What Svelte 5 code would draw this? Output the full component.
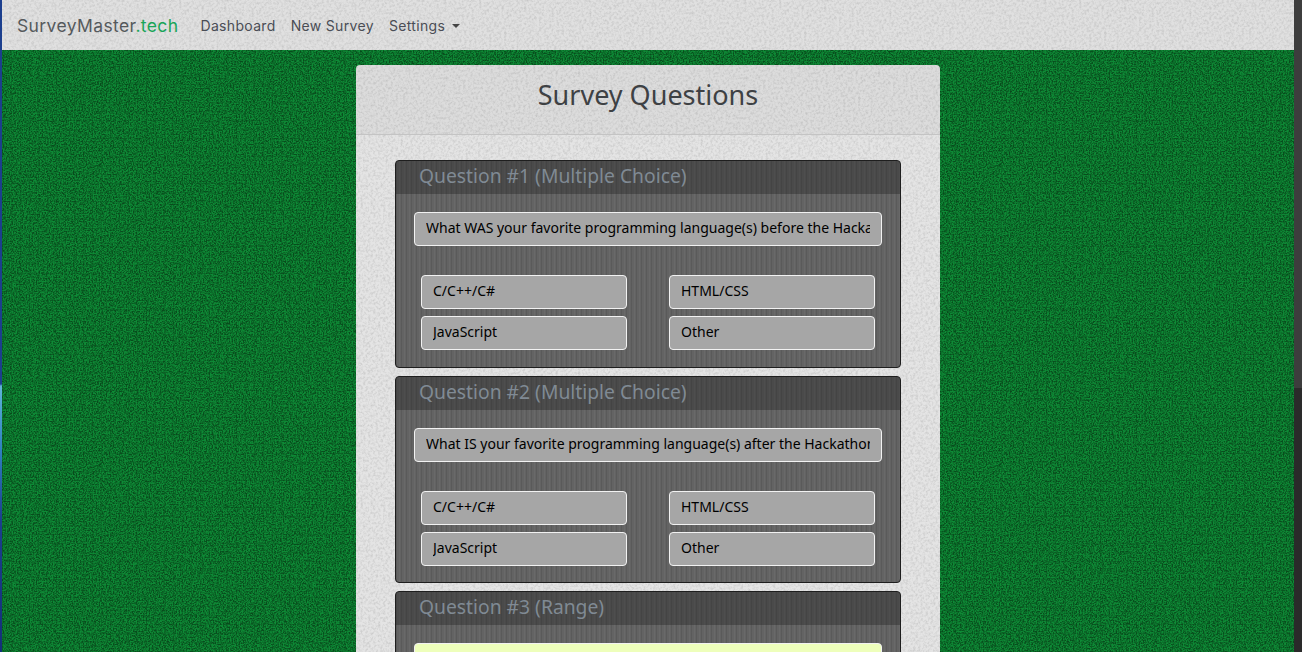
<script>
    let questions = [
        {title: "Question #1 (Multiple Choice)", text: "What WAS your favorite programming language(s) before the Hackathon?", options: ["C/C++/C#", "HTML/CSS", "JavaScript", "Other"]},
        {title: "Question #2 (Multiple Choice)", text: "What IS your favorite programming language(s) after the Hackathon?", options: ["C/C++/C#", "HTML/CSS", "JavaScript", "Other"]},
        {title: "Question #3 (Range)", text: "", options: [], filled: true}
    ];
</script>

<style>
    :global(body) {
        margin: 0;
        overflow: hidden;
    }

    .page {
        display: flex;
        height: 652px;
        overflow: hidden;
        font-family: "Noto Sans", sans-serif;
        --paper: url("data:image/svg+xml,%3Csvg xmlns='http://www.w3.org/2000/svg' width='300' height='300'%3E%3Cfilter id='p' color-interpolation-filters='sRGB'%3E%3CfeTurbulence type='fractalNoise' baseFrequency='.4' numOctaves='3' seed='9' stitchTiles='stitch'/%3E%3CfeColorMatrix values='0 0 0 0 .55 0 0 0 0 .55 0 0 0 0 .55 .6 0 0 0 -.24'/%3E%3C/filter%3E%3Crect width='300' height='300' filter='url(%23p)'/%3E%3C/svg%3E");
    }

    .edge {
        width: 2px;
        flex: none;
        background: linear-gradient(#1c3f8e 0, #1c3f8e 384px, #5fb4d8 386px, #2f7fc0 450px, #1c3f8e 520px, #14307a 652px);
    }

    .main {
        flex: 1;
        min-width: 0;
        overflow: hidden;
        background-color: #0e8a36;
        background-image:
            url("data:image/svg+xml,%3Csvg xmlns='http://www.w3.org/2000/svg' width='300' height='300'%3E%3Cfilter id='n' color-interpolation-filters='sRGB'%3E%3CfeTurbulence type='fractalNoise' baseFrequency='.7' numOctaves='2' seed='4' stitchTiles='stitch'/%3E%3CfeColorMatrix values='0 0 0 0 .03 0 0 0 0 .3 0 0 0 0 .11 3 0 0 0 -1.1'/%3E%3C/filter%3E%3Crect width='300' height='300' filter='url(%23n)'/%3E%3C/svg%3E"),
            repeating-linear-gradient(0deg, rgba(0, 40, 10, .12) 0 1px, transparent 1px 9px),
            repeating-linear-gradient(90deg, rgba(0, 40, 10, .12) 0 1px, transparent 1px 9px);
    }

    .scrollbar {
        width: 8px;
        flex: none;
        background: #2a2a2a;
    }

    .thumb {
        height: 388px;
        background: #3d3d3d;
    }

    nav {
        height: 50px;
        box-sizing: border-box;
        display: flex;
        align-items: center;
        padding: 0 15px;
        font-family: Inter, sans-serif;
        background-color: #e0e0e0;
        background-image: var(--paper);
    }

    .brand {
        font-size: 17.5px;
        letter-spacing: .38px;
        color: #55595c;
        margin-right: 22px;
    }

    .brand span {
        color: #18a558;
    }

    nav a {
        font-size: 14px;
        letter-spacing: .33px;
        color: #4a4d55;
        margin-right: 15px;
        display: flex;
        align-items: center;
    }

    .caret {
        width: 0;
        height: 0;
        margin-left: 7px;
        margin-top: 2px;
        border: 4.5px solid transparent;
        border-top-color: #444;
        border-bottom: 0;
    }

    .card {
        width: 584px;
        margin: 15px auto 0;
        border-radius: 4px 4px 0 0;
        background-color: #e4e4e4;
        background-image: var(--paper);
        padding-bottom: 20px;
    }

    .card-head {
        height: 69px;
        display: flex;
        align-items: center;
        justify-content: center;
        background: rgba(0, 0, 0, .03);
        border-bottom: 1px solid #c4c4c4;
    }

    h1 {
        margin: 0 0 10px;
        font-size: 27px;
        font-weight: 400;
        color: #3e4144;
    }

    .card-body {
        padding: 25px 39px 0;
        display: flex;
        flex-direction: column;
        gap: 8px;
    }

    .panel {
        height: 207.6px;
        box-sizing: border-box;
        border: 1px solid #1e1e1e;
        border-radius: 4px;
        overflow: hidden;
        background-color: #636363;
        background-image: repeating-linear-gradient(90deg, rgba(0, 0, 0, .09) 0 1px, transparent 1px 3px, rgba(255, 255, 255, .04) 3px 4px, transparent 4px 5px);
        flex: none;
    }

    .panel-head {
        height: 33px;
        box-sizing: border-box;
        display: flex;
        align-items: center;
        padding: 0 23px 4px;
        font-size: 19.3px;
        color: #808a94;
        background: rgba(30, 30, 30, .36);
    }

    .panel-body {
        padding: 18px 18px 0;
    }

    input {
        display: block;
        width: 100%;
        box-sizing: border-box;
        height: 34px;
        padding: 0 11px 3px;
        border: 1px solid #f2f2f2;
        border-radius: 4px;
        background: #a6a6a6;
        color: #000;
        font-family: "Noto Sans", sans-serif;
        font-size: 14px;
        outline: none;
    }

    input.filled {
        background: #eeffbb;
    }

    .options {
        display: grid;
        grid-template-columns: 206px 206px;
        justify-content: space-between;
        gap: 7px 42px;
        padding: 29px 7px 0;
    }
</style>

<div class="page">
    <div class="edge"></div>
    <div class="main">
        <nav>
            <div class="brand">SurveyMaster<span>.tech</span></div>
            <a>Dashboard</a>
            <a>New Survey</a>
            <a>Settings<i class="caret"></i></a>
        </nav>
        <div class="card">
            <div class="card-head"><h1>Survey Questions</h1></div>
            <div class="card-body">
                {#each questions as q}
                    <div class="panel">
                        <div class="panel-head">{q.title}</div>
                        <div class="panel-body">
                            <input class:filled={q.filled} value={q.text} />
                            {#if q.options.length}
                                <div class="options">
                                    {#each q.options as o}
                                        <input value={o} />
                                    {/each}
                                </div>
                            {/if}
                        </div>
                    </div>
                {/each}
            </div>
        </div>
    </div>
    <div class="scrollbar"><div class="thumb"></div></div>
</div>
